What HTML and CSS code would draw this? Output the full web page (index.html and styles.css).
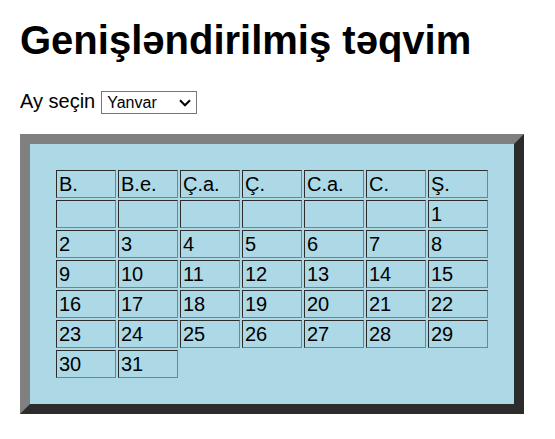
FILE: index.html
```html
<!DOCTYPE html>
<html lang="az">
<head>
<meta charset="utf-8">
<title>Genişləndirilmiş təqvim</title>
<link rel="stylesheet" href="styles.css">
</head>
<body>
<h1>Genişləndirilmiş təqvim</h1>
<form class="picker">
  <label for="month">Ay seçin</label>
  <span class="select-box">
    <select id="month">
      <option selected>Yanvar</option>
      <option>Fevral</option>
      <option>Mart</option>
      <option>Aprel</option>
      <option>May</option>
      <option>İyun</option>
      <option>İyul</option>
      <option>Avqust</option>
      <option>Sentyabr</option>
      <option>Oktyabr</option>
      <option>Noyabr</option>
      <option>Dekabr</option>
    </select>
    <svg class="arrow" viewBox="0 0 12 8" width="12" height="8" aria-hidden="true">
      <path d="M1 1.3 L6 6.3 L11 1.3" fill="none" stroke="#000" stroke-width="2"/>
    </svg>
  </span>
</form>
<table class="calendar">
  <thead>
    <tr><th>B.</th><th>B.e.</th><th>Ç.a.</th><th>Ç.</th><th>C.a.</th><th>C.</th><th>Ş.</th></tr>
  </thead>
  <tbody>
    <tr><td></td><td></td><td></td><td></td><td></td><td></td><td>1</td></tr>
    <tr><td>2</td><td>3</td><td>4</td><td>5</td><td>6</td><td>7</td><td>8</td></tr>
    <tr><td>9</td><td>10</td><td>11</td><td>12</td><td>13</td><td>14</td><td>15</td></tr>
    <tr><td>16</td><td>17</td><td>18</td><td>19</td><td>20</td><td>21</td><td>22</td></tr>
    <tr><td>23</td><td>24</td><td>25</td><td>26</td><td>27</td><td>28</td><td>29</td></tr>
    <tr><td>30</td><td>31</td></tr>
  </tbody>
</table>
</body>
</html>
```
FILE: styles.css
```css
body {
  margin: 20px;
  background: #fff;
  color: #000;
  font: 20px/24px "Liberation Sans", Arial, sans-serif;
}

h1 {
  margin: 0 0 30px;
  font-size: 40px;
  line-height: 40px;
}

.picker {
  display: flex;
  align-items: flex-start;
  gap: 6px;
  margin-bottom: 20px;
}

.picker label {
  line-height: 22px;
}

.select-box {
  display: flex;
  position: relative;
  padding-top: 1px;
}

.select-box select {
  appearance: none;
  box-sizing: border-box;
  width: 96px;
  height: 23px;
  margin: 0;
  padding: 0 20px 0 5px;
  border: 1px solid #767676;
  border-radius: 0;
  background-color: #fff;
  color: #000;
  font-family: inherit;
  font-size: 16px;
}

.arrow {
  position: absolute;
  top: 9px;
  right: 6px;
  pointer-events: none;
}

.calendar {
  box-sizing: border-box;
  padding: 24px;
  border: 10px solid;
  border-color: #808080 #2c2c2c #2c2c2c #808080;
  border-spacing: 2px;
  background: #add8e6;
}

.calendar th,
.calendar td {
  box-sizing: border-box;
  width: 60px;
  height: 28px;
  padding: 1px 2px;
  border: 1px solid;
  border-color: #2c2c2c #808080 #808080 #2c2c2c;
  font-weight: normal;
  text-align: left;
}
```
